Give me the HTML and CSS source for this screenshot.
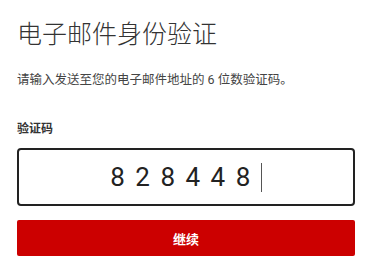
FILE: index.html
```html
<!DOCTYPE html>
<html lang="zh-CN">
<head>
    <meta charset="UTF-8">
    <meta name="viewport" content="width=device-width, initial-scale=1.0">
    <title>电子邮件身份验证</title>
    <link rel="stylesheet" href="styles.css">
</head>
<body>
    <div class="verify-page">
        <h1 class="verify-title">电子邮件身份验证</h1>
        <p class="verify-desc">请输入发送至您的电子邮件地址的 6 位数验证码。</p>

        <form class="verify-form">
            <label class="field-label" for="code">验证码</label>
            <div class="code-box">
                <span class="code-digits">828448</span><span class="caret"></span>
            </div>
            <button type="submit" class="btn">继续</button>
        </form>
    </div>
</body>
</html>
```

FILE: styles.css
```css
:root {
    --primary-color: #cc0000;
    --text-color: #333333;
    --border-color: #222222;
}

* {
    margin: 0;
    padding: 0;
    box-sizing: border-box;
    font-family: Roboto, "Noto Sans CJK SC", sans-serif;
}

body {
    background-color: #ffffff;
    color: var(--text-color);
}

.verify-page {
    padding: 19px 19px 0 17px;
}

.verify-title {
    font-size: 25px;
    font-weight: 300;
    line-height: 32px;
    color: #333;
    margin-bottom: 20px;
}

.verify-desc {
    font-size: 12.5px;
    line-height: 18px;
    color: #444;
    margin-bottom: 31px;
}

.field-label {
    display: block;
    font-size: 12px;
    font-weight: bold;
    line-height: 18px;
    color: #333;
    margin-bottom: 10px;
}

.code-box {
    height: 58px;
    border: 2px solid var(--border-color);
    border-radius: 4px;
    display: flex;
    align-items: center;
    justify-content: center;
    margin-bottom: 14px;
}

.code-digits {
    font-size: 26px;
    letter-spacing: 10.5px;
    color: #222;
}

.caret {
    width: 1px;
    height: 29px;
    background-color: #555;
}

.btn {
    display: block;
    width: 100%;
    height: 36px;
    background-color: var(--primary-color);
    color: #ffffff;
    border: none;
    border-radius: 2px;
    font-size: 13px;
    font-weight: bold;
    cursor: pointer;
}
```
